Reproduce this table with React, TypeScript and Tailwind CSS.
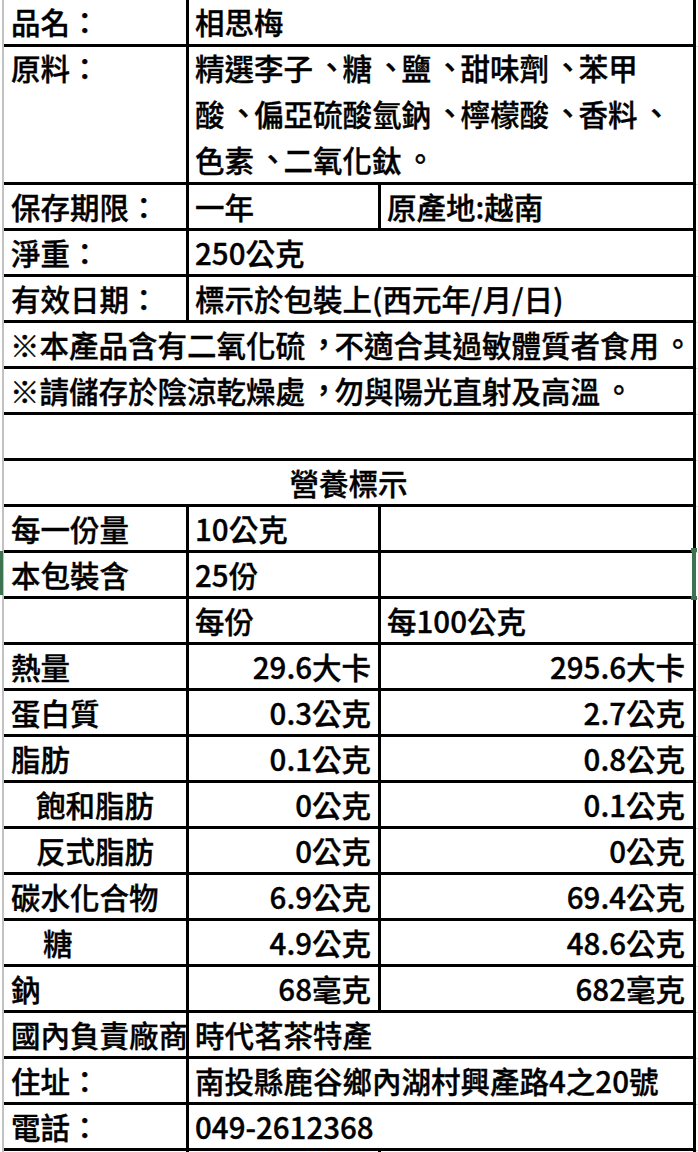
import React from "react";

const B = "border-b-[3px] border-r-[3px] border-black flex whitespace-nowrap";
const H = "h-[46px] items-center";

function fmt(s?: React.ReactNode): React.ReactNode {
  if (typeof s !== "string") return s;
  const parts = s.split(/([、。，])/);
  return (
    <span>
      {parts.map((p, i) =>
        p === "、" || p === "。" || p === "，" ? (
          <span key={i} className="inline-block translate-x-[4px] -translate-y-[2px]">
            {p}
          </span>
        ) : (
          <React.Fragment key={i}>{p}</React.Fragment>
        )
      )}
    </span>
  );
}

function Gut({ h }: { h: string }) {
  return <div className={`w-[2px] ${h} border-b border-[#d9d9d9]`} />;
}

function Row2({ a, b, h = "h-[46px]" }: { a: React.ReactNode; b: React.ReactNode; h?: string }) {
  return (
    <div className="flex">
      <div className={`${B} ${h} items-center w-[185px] pl-[7px]`}>{a}</div>
      <div className={`${B} ${h} items-center w-[507px] pl-[6px]`}>{b}</div>
      <Gut h={h} />
    </div>
  );
}

function Full({ children, center }: { children?: React.ReactNode; center?: boolean }) {
  return (
    <div className="flex">
      <div className={`${B} ${H} w-[692px] ${center ? "justify-center" : "pl-[6px]"}`}>{fmt(children)}</div>
      <Gut h="h-[46px]" />
    </div>
  );
}

function Nut({ a, b, c, indent }: { a?: React.ReactNode; b?: React.ReactNode; c?: React.ReactNode; indent?: string }) {
  return (
    <div className="flex">
      <div className={`${B} ${H} w-[185px] ${indent ?? "pl-[7px]"}`}>{a}</div>
      <div className={`${B} ${H} w-[192px] justify-end pr-[7px]`}>{b}</div>
      <div className={`${B} ${H} w-[315px] justify-end pr-[8px]`}>{c}</div>
      <Gut h="h-[46px]" />
    </div>
  );
}

function Nut3({ a, b, c }: { a?: React.ReactNode; b?: React.ReactNode; c?: React.ReactNode }) {
  return (
    <div className="flex">
      <div className={`${B} ${H} w-[185px] pl-[7px]`}>{a}</div>
      <div className={`${B} ${H} w-[192px] pl-[6px]`}>{b}</div>
      <div className={`${B} ${H} w-[315px] pl-[6px]`}>{c}</div>
      <Gut h="h-[46px]" />
    </div>
  );
}

export default function App() {
  return (
    <div
      lang="zh-Hant-TW"
      className="relative w-[698px] h-[1152px] overflow-hidden bg-white text-black text-[29.5px] font-medium leading-none [-webkit-text-stroke:0.35px_#000]"
      style={{ fontFamily: '"Noto Sans CJK TC", "Noto Sans", sans-serif' }}
    >
      <div className="flex">
        <div className="w-[4px] flex justify-end">
          <div className="w-[2px] h-[1152px] bg-[#c2c2c2]" />
        </div>
        <div className="flex flex-col">
          <div className="flex">
            <div className={`${B} h-[47px] items-center w-[185px] pl-[7px]`}>品名：</div>
            <div className={`${B} h-[47px] items-center w-[507px] pl-[6px]`}>相思梅</div>
            <Gut h="h-[47px]" />
          </div>
          <div className="flex">
            <div className={`${B} h-[138px] items-start w-[185px] pl-[7px] leading-[46px]`}>
              <div className="-mt-[3px]">原料：</div>
            </div>
            <div className={`${B} h-[138px] items-start w-[507px] pl-[6px] leading-[46px]`}>
              <div className="-mt-[3px] flex flex-col">
                {fmt("精選李子、糖、鹽、甜味劑、苯甲")}
                {fmt("酸、偏亞硫酸氫鈉、檸檬酸、香料、")}
                {fmt("色素、二氧化鈦。")}
              </div>
            </div>
            <Gut h="h-[138px]" />
          </div>
          <div className="flex">
            <div className={`${B} ${H} w-[185px] pl-[7px]`}>保存期限：</div>
            <div className={`${B} ${H} w-[192px] pl-[6px]`}>一年</div>
            <div className={`${B} ${H} w-[315px] pl-[6px]`}>原產地:越南</div>
            <Gut h="h-[46px]" />
          </div>
          <Row2 a="淨重：" b="250公克" />
          <Row2 a="有效日期：" b="標示於包裝上(西元年/月/日)" />
          <Full>※本產品含有二氧化硫，不適合其過敏體質者食用。</Full>
          <Full>※請儲存於陰涼乾燥處，勿與陽光直射及高溫。</Full>
          <Full />
          <Full center>營養標示</Full>
          <Nut3 a="每一份量" b="10公克" />
          <Nut3 a="本包裝含" b="25份" />
          <Nut3 b="每份" c="每100公克" />
          <Nut a="熱量" b="29.6大卡" c="295.6大卡" />
          <Nut a="蛋白質" b="0.3公克" c="2.7公克" />
          <Nut a="脂肪" b="0.1公克" c="0.8公克" />
          <Nut a="飽和脂肪" b="0公克" c="0.1公克" indent="pl-[32px]" />
          <Nut a="反式脂肪" b="0公克" c="0公克" indent="pl-[32px]" />
          <Nut a="碳水化合物" b="6.9公克" c="69.4公克" />
          <Nut a="糖" b="4.9公克" c="48.6公克" indent="pl-[39px]" />
          <Nut a="鈉" b="68毫克" c="682毫克" />
          <Row2 a="國內負責廠商" b="時代茗茶特產" />
          <Row2 a="住址：" b="南投縣鹿谷鄉內湖村興產路4之20號" />
          <Row2 a="電話：" b="049-2612368" />
          <Nut3 />
        </div>
      </div>
      <div className="absolute left-0 top-[551px] w-[3px] h-[44px] bg-[#3e7351]" />
      <div className="absolute left-[692px] top-[549px] w-[4px] h-[50px] bg-[#3e7351]" />
      <div className="absolute left-[691px] top-[548px] w-[6px] h-[4px] bg-[#3e7351]" />
      <div className="absolute left-[691px] top-[596px] w-[6px] h-[4px] bg-[#3e7351]" />
    </div>
  );
}
